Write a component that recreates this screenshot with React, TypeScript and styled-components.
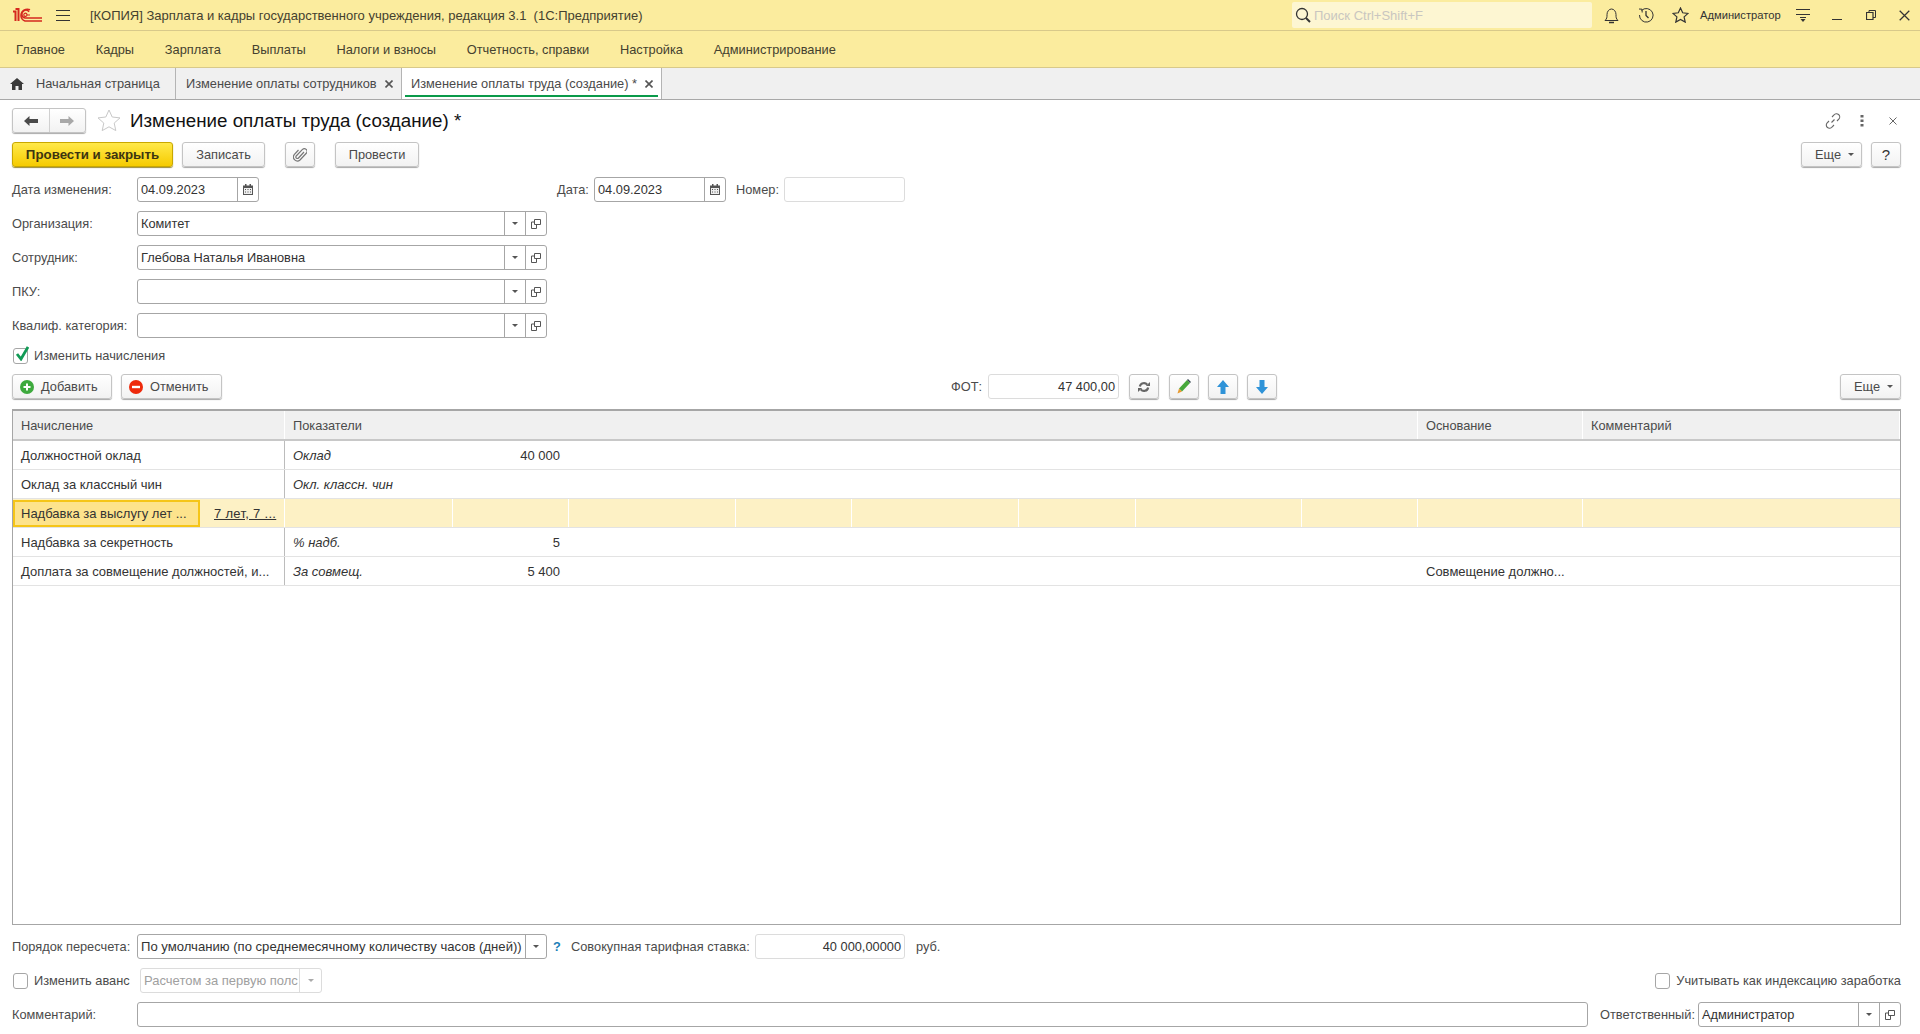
import * as React from 'react';
import styled, { createGlobalStyle } from 'styled-components';

const GlobalStyle = createGlobalStyle`
  html, body {
    margin: 0;
    padding: 0;
    background: #fff;
  }
  body {
    font-family: "Liberation Sans", Arial, sans-serif;
    font-size: 12.8px;
    color: #333;
  }
  * {
    box-sizing: border-box;
  }
`;

const Page = styled.div`
  width: 1920px;
  height: 1034px;
  display: flex;
  flex-direction: column;
  overflow: hidden;
  background: #fff;
`;

const TitleBar = styled.div`
  height: 31px;
  flex: none;
  display: flex;
  align-items: center;
  background: #fbec9e;
  border-bottom: 1px solid #d8c98a;
  padding-left: 13px;
`;

const MenuToggle = styled.div`
  width: 14px;
  height: 11px;
  margin-left: 14px;
  border-top: 1px solid #333;
  border-bottom: 1px solid #333;
  position: relative;
  &::after {
    content: '';
    position: absolute;
    left: 0;
    right: 0;
    top: 4px;
    border-top: 1px solid #333;
  }
`;

const WindowTitle = styled.div`
  margin-left: 20px;
  font-size: 13px;
  color: #44412f;
  white-space: pre;
  flex: 1;
`;

const SearchBox = styled.div`
  width: 300px;
  height: 26px;
  flex: none;
  background: #fdf6d2;
  border-radius: 2px;
  display: flex;
  align-items: center;
  gap: 3px;
  padding-left: 3px;
  font-size: 13px;
  color: #c9c6c0;
`;

const TopIcons = styled.div`
  display: flex;
  flex: none;
  align-items: center;
  margin-left: 1px;
  height: 100%;
`;

const TopIcon = styled.div<{ $w: number }>`
  width: ${(p) => p.$w}px;
  display: flex;
  justify-content: center;
  align-items: center;
  color: #333;
`;

const UserName = styled.div`
  font-size: 11.2px;
  color: #333;
  width: 89px;
  padding-left: 3px;
`;

const MenuBar = styled.div`
  height: 37px;
  flex: none;
  display: flex;
  align-items: center;
  gap: 30.8px;
  padding: 0 0 0 16px;
  background: #fbec9e;
  border-bottom: 1px solid #d8c98a;
  color: #44412f;
  font-size: 12.8px;
`;

const TabBar = styled.div`
  height: 32px;
  flex: none;
  display: flex;
  background: #f0f0f0;
  border-bottom: 1px solid #a8a8a8;
`;

const Tab = styled.div<{ $w: number; $active?: boolean }>`
  width: ${(p) => p.$w}px;
  display: flex;
  align-items: center;
  height: 100%;
  padding-left: ${(p) => (p.$active ? 9 : 10)}px;
  border-right: 1px solid #b4b4b4;
  color: #4a4a4a;
  position: relative;
  white-space: nowrap;
  background: ${(p) => (p.$active ? '#fff' : 'transparent')};
  &::after {
    content: '';
    display: ${(p) => (p.$active ? 'block' : 'none')};
    position: absolute;
    left: 3px;
    right: 3px;
    bottom: 2px;
    height: 2px;
    background: #0a9a4a;
  }
`;

const TabClose = styled.span`
  margin-left: auto;
  margin-right: 8px;
  width: 8px;
  display: flex;
`;

const HomeIcon = styled.svg`
  margin-right: 12px;
`;

const Form = styled.div`
  flex: 1;
  display: flex;
  flex-direction: column;
  padding: 8px 19px 7px 12px;
  min-height: 0;
`;

const HeadRow = styled.div`
  display: flex;
  align-items: center;
  height: 25px;
`;

const NavGroup = styled.div`
  width: 74px;
  height: 25px;
  display: flex;
  border: 1px solid #c4c4c4;
  border-radius: 3px;
  box-shadow: 0 1px 1px #aaa;
  background: linear-gradient(#fff, #f2f2f2);
`;

const NavButton = styled.div<{ $divided?: boolean }>`
  flex: 1;
  display: flex;
  align-items: center;
  justify-content: center;
  border-right: ${(p) => (p.$divided ? '1px solid #d0d0d0' : 'none')};
`;

const FavStar = styled.svg`
  margin-left: 11px;
`;

const FormTitle = styled.div`
  margin-left: 9px;
  font-size: 18.75px;
  color: #111;
  flex: 1;
`;

const HeadIcons = styled.div`
  display: flex;
  align-items: center;
  gap: 19px;
`;

const HeadClose = styled.span`
  margin-left: 6px;
  margin-right: 4px;
`;

const Toolbar = styled.div<{ $top: number }>`
  display: flex;
  align-items: center;
  height: 25px;
  margin-top: ${(p) => p.$top}px;
`;

const Button = styled.div<{ $w: number; $left?: number; $primary?: boolean; $pad?: number }>`
  width: ${(p) => p.$w}px;
  height: 25px;
  flex: none;
  margin-left: ${(p) => p.$left ?? 0}px;
  padding-left: ${(p) => p.$pad ?? 0}px;
  display: flex;
  align-items: center;
  justify-content: ${(p) => (p.$pad ? 'flex-start' : 'center')};
  gap: 7px;
  border-radius: 3px;
  border: 1px solid ${(p) => (p.$primary ? '#c9a800' : '#c4c4c4')};
  box-shadow: 0 1px 1px ${(p) => (p.$primary ? '#9a8a3a' : '#a8a8a8')};
  background: ${(p) => (p.$primary ? 'linear-gradient(#ffe94a, #f6cb00)' : 'linear-gradient(#fff, #f2f2f2)')};
  color: ${(p) => (p.$primary ? '#3d3510' : '#4a4a4a')};
  font-weight: ${(p) => (p.$primary ? 700 : 400)};
  font-size: ${(p) => (p.$primary ? '13.3px' : '12.8px')};
  white-space: nowrap;
`;

const HelpGlyph = styled.span`
  font-size: 15px;
  color: #333;
`;

const Spacer = styled.div`
  flex: 1;
`;

const FieldRow = styled.div<{ $top: number }>`
  display: flex;
  align-items: center;
  height: 25px;
  margin-top: ${(p) => p.$top}px;
`;

const Label = styled.div<{ $w?: number; $left?: number }>`
  width: ${(p) => (p.$w ? `${p.$w}px` : 'auto')};
  margin-left: ${(p) => p.$left ?? 0}px;
  flex: none;
  color: #4b4b4b;
  white-space: nowrap;
`;

const Field = styled.div<{ $w?: number; $left?: number; $light?: boolean }>`
  width: ${(p) => (p.$w ? `${p.$w}px` : 'auto')};
  flex: ${(p) => (p.$w ? 'none' : 1)};
  margin-left: ${(p) => p.$left ?? 0}px;
  height: 25px;
  display: flex;
  align-items: stretch;
  background: #fff;
  border: 1px solid ${(p) => (p.$light ? '#dcdcdc' : '#a6a6a6')};
  border-radius: 3px;
  overflow: hidden;
`;

const FieldValue = styled.div<{ $right?: boolean; $muted?: boolean; $size?: number }>`
  flex: 1;
  min-width: 0;
  display: flex;
  align-items: center;
  justify-content: ${(p) => (p.$right ? 'flex-end' : 'flex-start')};
  padding: 0 3px;
  color: ${(p) => (p.$muted ? '#a0a0a0' : '#333')};
  font-size: ${(p) => p.$size ?? 12.8}px;
  white-space: nowrap;
  overflow: hidden;
`;

const FieldAddon = styled.div<{ $w: number; $light?: boolean }>`
  width: ${(p) => p.$w}px;
  flex: none;
  display: flex;
  align-items: center;
  justify-content: center;
  border-left: 1px solid ${(p) => (p.$light ? '#dcdcdc' : '#a6a6a6')};
`;

const Caret = styled.span<{ $muted?: boolean }>`
  width: 0;
  height: 0;
  border-left: 3px solid transparent;
  border-right: 3px solid transparent;
  border-top: 3px solid ${(p) => (p.$muted ? '#aaa' : '#555')};
`;

const CheckBox = styled.div`
  width: 15px;
  height: 16px;
  flex: none;
  margin-left: 1px;
  border: 1px solid #a6a6a6;
  border-radius: 3px;
  background: #fff;
  position: relative;
`;

const CheckLabel = styled.div<{ $w?: number }>`
  margin-left: 6px;
  width: ${(p) => (p.$w ? `${p.$w}px` : 'auto')};
  flex: none;
  color: #4b4b4b;
  white-space: nowrap;
`;

const CheckMark = styled.svg`
  position: absolute;
  left: 1px;
  top: -3px;
`;

const HelpMark = styled.div`
  margin-left: 6px;
  width: 18px;
  flex: none;
  color: #1c7fb8;
  font-weight: 700;
`;

const Table = styled.div`
  flex: 1;
  min-height: 0;
  margin-top: 10px;
  border: 1px solid #a6a6a6;
  border-top-width: 2px;
`;

const tracks = '272px 168px 116px 167px 116px 167px 117px 166px 116px 165px 1fr';

const HeaderRow = styled.div`
  display: grid;
  grid-template-columns: ${tracks};
  height: 30px;
  background: #f0f0f0;
  border-bottom: 2px solid #c8c8c8;
`;

const HeaderCell = styled.div<{ $span: number }>`
  grid-column: span ${(p) => p.$span};
  display: flex;
  align-items: center;
  padding-left: 8px;
  color: #4b4b4b;
  border-right: 1px solid #fff;
`;

const Row = styled.div<{ $selected?: boolean }>`
  display: grid;
  grid-template-columns: ${tracks};
  height: 29px;
  border-bottom: 1px solid #e3e3e3;
  background: ${(p) => (p.$selected ? '#fdf1c5' : '#fff')};
  font-size: 13px;
`;

const Cell = styled.div<{ $first?: boolean; $selected?: boolean; $right?: boolean; $italic?: boolean }>`
  min-width: 0;
  display: flex;
  align-items: center;
  justify-content: ${(p) => (p.$right ? 'flex-end' : 'flex-start')};
  padding: 0 ${(p) => (p.$right ? 9 : 8)}px 0 8px;
  font-style: ${(p) => (p.$italic ? 'italic' : 'normal')};
  color: #333;
  white-space: nowrap;
  overflow: hidden;
  border-right: ${(p) => (p.$selected ? '1px solid #fff' : p.$first ? '1px solid #bcbcbc' : 'none')};
`;

const ActiveCell = styled.div`
  width: 187px;
  height: 27px;
  flex: none;
  display: flex;
  align-items: center;
  padding-left: 6px;
  background: #fde38c;
  border: 2px solid #f5c518;
  color: #333;
`;

const LinkText = styled.span`
  margin-left: 14px;
  text-decoration: underline;
  letter-spacing: 0.3px;
  color: #333;
  white-space: nowrap;
`;

const SelectedFirst = styled.div`
  display: flex;
  align-items: center;
  border-right: 1px solid #fff;
  overflow: hidden;
`;

const Logo = () => (
  <svg width="29" height="14" viewBox="0 0 29 14" fill="none">
    <path d="M0 3.5h2.5V13M2.5 1h3v12" stroke="#d5291f" strokeWidth="2" />
    <path d="M16 3.8A4 4 0 1 0 12 10h17" stroke="#d5291f" strokeWidth="1.6" />
    <path d="M17 1.8A6.6 6.6 0 0 0 8 8a6 6 0 0 0 4 5h17" stroke="#d5291f" strokeWidth="1.6" />
    <path d="M14 6.6A1.6 1.6 0 1 0 14 7h3" stroke="#d5291f" strokeWidth="1.2" />
  </svg>
);

const Cross = ({ size = 8, color = '#555', width = 1.6 }: { size?: number; color?: string; width?: number }) => (
  <svg width={size} height={size} viewBox="0 0 8 8" display="block">
    <path d="M.5.5l7 7M7.5.5l-7 7" stroke={color} strokeWidth={width} />
  </svg>
);

const OpenIcon = () => (
  <svg width="10" height="10" viewBox="0 0 10 10" fill="none" stroke="#555">
    <path d="M3.5.5h6v5h-6z" />
    <path d="M3.5 3H.5v6.5h5V6" />
  </svg>
);

const CalendarIcon = () => (
  <svg width="10" height="11" viewBox="0 0 10 11">
    <path d="M0 1.5h10V11H0z" fill="#555" />
    <path d="M1 4h8v6H1z" fill="#eee" />
    <path d="M2 0h1.5v2.5H2zM6.5 0H8v2.5H6.5z" fill="#555" />
    <path d="M2 5h1v1H2zM4.5 5h1v1h-1zM7 5h1v1H7zM2 7.5h1v1H2zM4.5 7.5h1v1h-1zM7 7.5h1v1H7z" fill="#555" />
  </svg>
);

const SelectField = ({ value, w, left }: { value?: string; w?: number; left?: number }) => (
  <Field $w={w} $left={left}>
    <FieldValue>{value}</FieldValue>
    <FieldAddon $w={21}>
      <Caret />
    </FieldAddon>
    <FieldAddon $w={21}>
      <OpenIcon />
    </FieldAddon>
  </Field>
);

const DateField = ({ value, w }: { value: string; w: number }) => (
  <Field $w={w}>
    <FieldValue>{value}</FieldValue>
    <FieldAddon $w={21}>
      <CalendarIcon />
    </FieldAddon>
  </Field>
);

const More = ({ w }: { w: number }) => (
  <Button $w={w} $pad={13}>
    Еще
    <Caret />
  </Button>
);

const menuItems = [
  'Главное',
  'Кадры',
  'Зарплата',
  'Выплаты',
  'Налоги и взносы',
  'Отчетность, справки',
  'Настройка',
  'Администрирование',
];

const rows = [
  { name: 'Должностной оклад', ind: 'Оклад', val: '40 000' },
  { name: 'Оклад за классный чин', ind: 'Окл. классн. чин', val: '' },
  { name: 'Надбавка за выслугу лет ...', ind: '', val: '', selected: true, link: '7 лет, 7 ...' },
  { name: 'Надбавка за секретность', ind: '% надб.', val: '5' },
  { name: 'Доплата за совмещение должностей, и...', ind: 'За совмещ.', val: '5 400', basis: 'Совмещение должно...' },
];

export default function App() {
  return (
    <Page>
      <GlobalStyle />
      <TitleBar>
        <Logo />
        <MenuToggle />
        <WindowTitle>[КОПИЯ] Зарплата и кадры государственного учреждения, редакция 3.1  (1С:Предприятие)</WindowTitle>
        <SearchBox>
          <svg width="16" height="16" viewBox="0 0 16 16" fill="none" stroke="#333">
            <circle cx="7" cy="7" r="5.5" strokeWidth="1.3" />
            <path d="M11 11l4 4" strokeWidth="2" />
          </svg>
          Поиск Ctrl+Shift+F
        </SearchBox>
        <TopIcons>
          <TopIcon $w={36}>
            <svg width="15" height="17" viewBox="0 0 15 17" fill="none" stroke="#333">
              <path d="M1 13.5h13c-2-2-2-3-2-6 0-3-2-5.5-4.5-5.5S3 4.5 3 7.5c0 3 0 4-2 6z" />
              <path d="M5 15.5h5" strokeWidth="1.5" />
            </svg>
          </TopIcon>
          <TopIcon $w={34}>
            <svg width="16" height="16" viewBox="0 0 16 16" fill="none" stroke="#333">
              <path d="M3.5 3.5A6.8 6.8 0 1 1 1.5 8" />
              <path d="M1 2l3 .2.2 3.3" />
              <path d="M8 4v4.500l2.500 2.500" strokeWidth="1.3" />
            </svg>
          </TopIcon>
          <TopIcon $w={34}>
            <svg width="17" height="16" viewBox="0 0 17 16" fill="none" stroke="#333" strokeWidth="1.2">
              <path d="M8.5 1l2.2 4.8 5.3.6-3.900 3.500 1.100 5.200-4.700-2.700-4.700 2.700 1.100-5.200L1 6.400l5.300-.6z" />
            </svg>
          </TopIcon>
          <UserName>Администратор</UserName>
          <TopIcon $w={34}>
            <svg width="14" height="13" viewBox="0 0 14 13">
              <path d="M0 .5h14M0 5.500h14" stroke="#333" />
              <path d="M4 8.500h6" stroke="#333" />
              <path d="M4.500 10h5L7 13z" fill="#333" />
            </svg>
          </TopIcon>
          <TopIcon $w={34}>
            <svg width="10" height="10" viewBox="0 0 10 10">
              <path d="M0 9.500h10" stroke="#333" />
            </svg>
          </TopIcon>
          <TopIcon $w={34}>
            <svg width="10" height="10" viewBox="0 0 10 10" fill="none" stroke="#333">
              <path d="M.5 2.500h6.500v7H.5z" strokeWidth="1.2" />
              <path d="M3 2.500V.5h6.500v7H7" />
            </svg>
          </TopIcon>
          <TopIcon $w={32}>
            <Cross size={11} color="#333" width={0.9} />
          </TopIcon>
        </TopIcons>
      </TitleBar>

      <MenuBar>
        {menuItems.map((item) => (
          <span key={item}>{item}</span>
        ))}
      </MenuBar>

      <TabBar>
        <Tab $w={176}>
          <HomeIcon width="14" height="12" viewBox="0 0 14 12">
            <path d="M7 0L0 6h2v6h3.500V8h3v4H12V6h2z" fill="#3a3a3a" />
          </HomeIcon>
          Начальная страница
        </Tab>
        <Tab $w={226}>
          Изменение оплаты сотрудников
          <TabClose>
            <Cross />
          </TabClose>
        </Tab>
        <Tab $w={260} $active>
          Изменение оплаты труда (создание) *
          <TabClose>
            <Cross />
          </TabClose>
        </Tab>
      </TabBar>

      <Form>
        <HeadRow>
          <NavGroup>
            <NavButton $divided>
              <svg width="14" height="10" viewBox="0 0 14 10">
                <path d="M5.500 0v3H14v4H5.500v3L0 5z" fill="#4a4a4a" />
              </svg>
            </NavButton>
            <NavButton>
              <svg width="14" height="10" viewBox="0 0 14 10">
                <path d="M8.500 0v3H0v4h8.500v3L14 5z" fill="#a8a8a8" />
              </svg>
            </NavButton>
          </NavGroup>
          <FavStar width="24" height="23" viewBox="0 0 24 23" fill="none" stroke="#c8c8c8">
            <path d="M12 1l3.200 7 7.800.9-5.800 5.200 1.600 7.500L12 17.800l-6.800 3.800 1.600-7.500L1 8.900 8.800 8z" />
          </FavStar>
          <FormTitle>Изменение оплаты труда (создание) *</FormTitle>
          <HeadIcons>
            <svg width="16" height="16" viewBox="0 0 16 16" fill="none" stroke="#666" strokeWidth="1.1">
              <path d="M6.500 9.500l3-3M7 4l2-2a3 3 0 0 1 5 4l-2 2M9 12l-2 2a3 3 0 0 1-5-4l2-2" />
            </svg>
            <svg width="4" height="12" viewBox="0 0 4 12">
              <path d="M.5 0h3v2.500h-3zM.5 4.500h3V7h-3zM.5 9h3v2.500h-3z" fill="#666" />
            </svg>
            <HeadClose>
              <Cross size={8} color="#666" width={1} />
            </HeadClose>
          </HeadIcons>
        </HeadRow>

        <Toolbar $top={9}>
          <Button $w={161} $primary>
            Провести и закрыть
          </Button>
          <Button $w={83} $left={9}>
            Записать
          </Button>
          <Button $w={30} $left={20}>
            <svg width="14" height="15" viewBox="0 0 14 15" fill="none" stroke="#777" strokeWidth="1.2">
              <path d="M11 5l-5.500 6a1.500 1.500 0 0 1-2.300-2L9.500 2.400a2.700 2.700 0 0 1 4 3.600l-6.500 7a4 4 0 0 1-5.800-5.400L5.500 3" />
            </svg>
          </Button>
          <Button $w={84} $left={20}>
            Провести
          </Button>
          <Spacer />
          <More w={61} />
          <Button $w={30} $left={9}>
            <HelpGlyph>?</HelpGlyph>
          </Button>
        </Toolbar>

        <FieldRow $top={10}>
          <Label $w={125}>Дата изменения:</Label>
          <DateField value="04.09.2023" w={122} />
          <Label $w={37} $left={298}>
            Дата:
          </Label>
          <DateField value="04.09.2023" w={132} />
          <Label $w={48} $left={10}>
            Номер:
          </Label>
          <Field $w={121} $light />
        </FieldRow>
        <FieldRow $top={9}>
          <Label $w={125}>Организация:</Label>
          <SelectField value="Комитет" w={410} />
        </FieldRow>
        <FieldRow $top={9}>
          <Label $w={125}>Сотрудник:</Label>
          <SelectField value="Глебова Наталья Ивановна" w={410} />
        </FieldRow>
        <FieldRow $top={9}>
          <Label $w={125}>ПКУ:</Label>
          <SelectField w={410} />
        </FieldRow>
        <FieldRow $top={9}>
          <Label $w={125}>Квалиф. категория:</Label>
          <SelectField w={410} />
        </FieldRow>
        <FieldRow $top={5}>
          <CheckBox>
            <CheckMark width="14" height="15" viewBox="0 0 14 15" fill="none">
              <path d="M2 8l4 5 7-12" stroke="#119a55" strokeWidth="2.8" />
            </CheckMark>
          </CheckBox>
          <CheckLabel>Изменить начисления</CheckLabel>
        </FieldRow>

        <Toolbar $top={6}>
          <Button $w={100} $pad={7}>
            <svg width="14" height="14" viewBox="0 0 14 14">
              <circle cx="7" cy="7" r="7" fill="#3eaa3e" />
              <path d="M3.500 7h7M7 3.500v7" stroke="#fff" strokeWidth="2" />
            </svg>
            Добавить
          </Button>
          <Button $w={101} $left={9} $pad={7}>
            <svg width="14" height="14" viewBox="0 0 14 14">
              <circle cx="7" cy="7" r="7" fill="#ee2a0c" />
              <path d="M3 7h8" stroke="#fff" strokeWidth="2.4" />
            </svg>
            Отменить
          </Button>
          <Label $w={37} $left={729}>
            ФОТ:
          </Label>
          <Field $w={131} $light>
            <FieldValue $right>47 400,00</FieldValue>
          </Field>
          <Button $w={30} $left={10}>
            <svg width="12" height="12" viewBox="0 0 13 13" fill="none" stroke="#666" strokeWidth="2.4">
              <path d="M2 6a4.500 4.500 0 0 1 8-2M11 7a4.500 4.500 0 0 1-8 2" />
              <path d="M8.500 5.500H13V1zM4.500 7.500H0V12z" fill="#666" stroke="none" />
            </svg>
          </Button>
          <Button $w={30} $left={10}>
            <svg width="14" height="15" viewBox="0 0 14 15">
              <path d="M10 1l3 3-8 8.500-3-3z" fill="#46a83c" />
              <path d="M10 1l1-1 3 3-1 1z" fill="#3a4a55" />
              <path d="M2 9.500l3 3-4.500 2z" fill="#e89a30" />
            </svg>
          </Button>
          <Button $w={30} $left={9}>
            <svg width="12" height="14" viewBox="0 0 12 14">
              <path d="M6 0l6 7H8.500v7h-5V7H0z" fill="#2f93d8" />
            </svg>
          </Button>
          <Button $w={30} $left={9}>
            <svg width="12" height="14" viewBox="0 0 12 14">
              <path d="M6 14l6-7H8.500V0h-5v7H0z" fill="#2f93d8" />
            </svg>
          </Button>
          <Spacer />
          <More w={61} />
        </Toolbar>

        <Table>
          <HeaderRow>
            <HeaderCell $span={1}>Начисление</HeaderCell>
            <HeaderCell $span={8}>Показатели</HeaderCell>
            <HeaderCell $span={1}>Основание</HeaderCell>
            <HeaderCell $span={1}>Комментарий</HeaderCell>
          </HeaderRow>
          {rows.map((row) => (
            <Row key={row.name} $selected={row.selected}>
              {row.selected ? (
                <SelectedFirst>
                  <ActiveCell>{row.name}</ActiveCell>
                  <LinkText>{row.link}</LinkText>
                </SelectedFirst>
              ) : (
                <Cell $first>{row.name}</Cell>
              )}
              <Cell $italic $selected={row.selected}>
                {row.ind}
              </Cell>
              <Cell $right $selected={row.selected}>
                {row.val}
              </Cell>
              {[0, 1, 2, 3, 4, 5].map((i) => (
                <Cell key={i} $selected={row.selected} />
              ))}
              <Cell $selected={row.selected}>{row.basis}</Cell>
              <Cell />
            </Row>
          ))}
        </Table>

        <FieldRow $top={9}>
          <Label $w={125}>Порядок пересчета:</Label>
          <Field $w={410}>
            <FieldValue $size={13.1}>По умолчанию (по среднемесячному количеству часов (дней))</FieldValue>
            <FieldAddon $w={21}>
              <Caret />
            </FieldAddon>
          </Field>
          <HelpMark>?</HelpMark>
          <Label $w={184}>Совокупная тарифная ставка:</Label>
          <Field $w={150} $light>
            <FieldValue $right>40 000,00000</FieldValue>
          </Field>
          <Label $left={11}>руб.</Label>
        </FieldRow>
        <FieldRow $top={9}>
          <CheckBox />
          <CheckLabel $w={106}>Изменить аванс</CheckLabel>
          <Field $w={182} $light>
            <FieldValue $muted $size={13}>
              Расчетом за первую полс
            </FieldValue>
            <FieldAddon $w={22} $light>
              <Caret $muted />
            </FieldAddon>
          </Field>
          <Spacer />
          <CheckBox />
          <CheckLabel>Учитывать как индексацию заработка</CheckLabel>
        </FieldRow>
        <FieldRow $top={9}>
          <Label $w={125}>Комментарий:</Label>
          <Field />
          <Label $w={98} $left={12}>
            Ответственный:
          </Label>
          <SelectField value="Администратор" w={203} />
        </FieldRow>
      </Form>
    </Page>
  );
}
